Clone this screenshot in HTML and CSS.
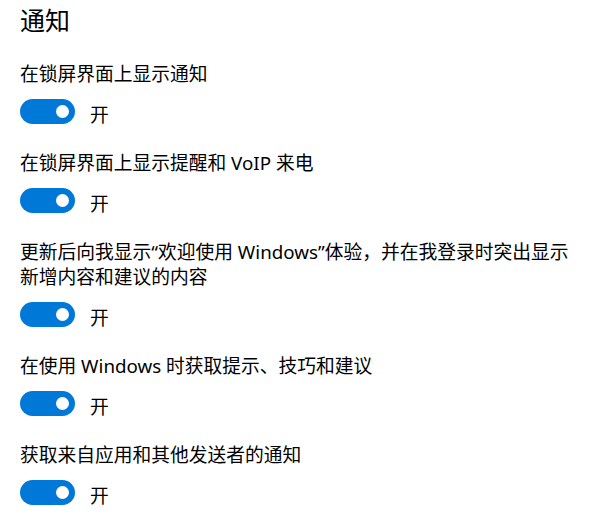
FILE: index.html
```html
<!DOCTYPE html>
<html lang="zh-CN">
<head>
    <meta charset="UTF-8">
    <title>通知</title>
    <link rel="stylesheet" href="styles.css">
</head>
<body>

    <div class="page">
        <h1>通知</h1>

        <div class="setting">
            <div class="label">在锁屏界面上显示通知</div>
            <div class="switch-row">
                <span class="switch"><span class="knob"></span></span>
                <span class="state">开</span>
            </div>
        </div>

        <div class="setting">
            <div class="label">在锁屏界面上显示提醒和 VoIP 来电</div>
            <div class="switch-row">
                <span class="switch"><span class="knob"></span></span>
                <span class="state">开</span>
            </div>
        </div>

        <div class="setting">
            <div class="label">更新后向我显示“欢迎使用 Windows”体验，并在我登录时突出显示新增内容和建议的内容</div>
            <div class="switch-row">
                <span class="switch"><span class="knob"></span></span>
                <span class="state">开</span>
            </div>
        </div>

        <div class="setting">
            <div class="label">在使用 Windows 时获取提示、技巧和建议</div>
            <div class="switch-row">
                <span class="switch"><span class="knob"></span></span>
                <span class="state">开</span>
            </div>
        </div>

        <div class="setting">
            <div class="label">获取来自应用和其他发送者的通知</div>
            <div class="switch-row">
                <span class="switch"><span class="knob"></span></span>
                <span class="state">开</span>
            </div>
        </div>
    </div>

</body>
</html>
```

FILE: styles.css
```css
* { margin: 0; padding: 0; box-sizing: border-box; }
body { background: #fff; color: #000; font-family: "Noto Sans", "Noto Sans CJK SC", sans-serif; }
.page { width: 580px; padding: 0 0 0 20px; }
h1 { font-size: 25px; font-weight: 400; line-height: 35px; margin: 3px 0 23px; }
.setting { margin-bottom: 26px; }
.label { font-size: 18.75px; line-height: 25px; margin-bottom: 13px; }
.switch-row { display: flex; align-items: flex-start; height: 25px; }
.switch { position: relative; display: inline-block; width: 55px; height: 25px; border-radius: 12.5px; background: #0078d7; }
.knob { position: absolute; right: 6px; top: 6px; width: 13px; height: 13px; border-radius: 50%; background: #fff; }
.state { font-size: 18.75px; line-height: 25px; margin: 3px 0 0 15px; }
```
